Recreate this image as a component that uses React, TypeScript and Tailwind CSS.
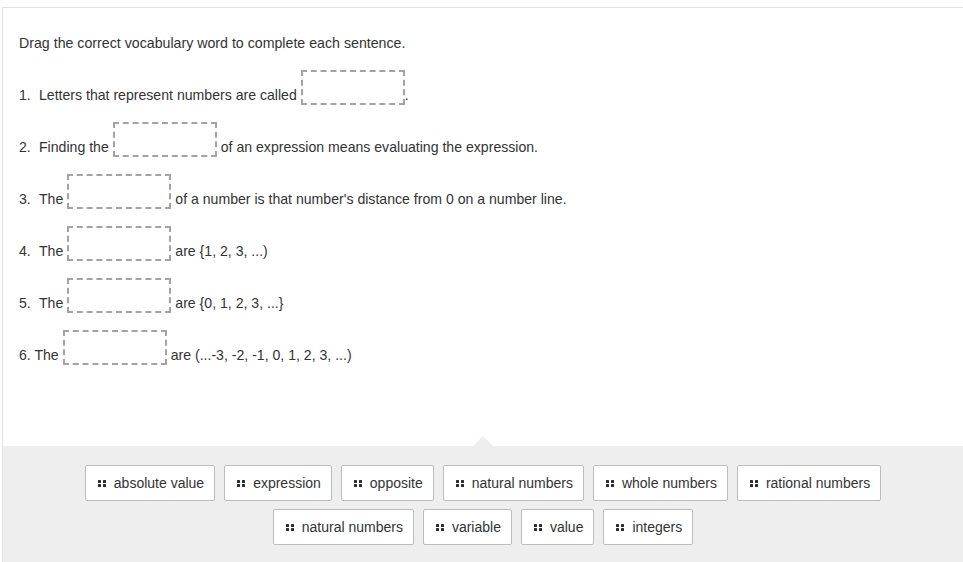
import React from 'react';

const WORDS_TOP = ['absolute value', 'expression', 'opposite', 'natural numbers', 'whole numbers', 'rational numbers'];
const WORDS_BOTTOM = ['natural numbers', 'variable', 'value', 'integers'];

function DropBox() {
  return (
    <span className="inline-block align-bottom w-[104px] h-[35px] border-2 border-dashed border-[#a3a3a3] mx-[4px]" />
  );
}

function GripIcon() {
  return (
    <svg width="8" height="7" viewBox="0 0 8 7" className="shrink-0">
      <rect x="0" y="0" width="3" height="3" rx="0.6" fill="#2b2b2b" />
      <rect x="5" y="0" width="3" height="3" rx="0.6" fill="#2b2b2b" />
      <rect x="0" y="4" width="3" height="3" rx="0.6" fill="#2b2b2b" />
      <rect x="5" y="4" width="3" height="3" rx="0.6" fill="#2b2b2b" />
    </svg>
  );
}

function WordChip({ word }: { word: string }) {
  return (
    <div className="flex items-center gap-[8px] h-[36px] pl-[12px] pr-[10px] bg-white border border-[#bcbcbc] rounded-[2px] text-[14px] text-[#333]">
      <GripIcon />
      <span>{word}</span>
    </div>
  );
}

function Sentence({ num, children }: { num: string; children: React.ReactNode }) {
  return (
    <div className="leading-[20px] mt-[17px]">
      <span className="inline-block w-[20px]">{num}</span>
      {children}
    </div>
  );
}

export default function App() {
  return (
    <div className="w-[963px] h-[562px] overflow-hidden bg-white pt-[7px] pl-[2px] font-['Liberation_Sans',Arial,sans-serif] text-[#333]">
      <div className="h-full border-t border-l border-[#e2e2e2] flex flex-col">
        <div className="shrink-0 pl-[16px] pt-[25px] text-[14.1px] h-[438px]">
          <p className="leading-[20px] text-[14.2px]">Drag the correct vocabulary word to complete each sentence.</p>

          <Sentence num="1.">
            Letters that represent numbers are called
            <DropBox />
            <span className="-ml-[4px]">.</span>
          </Sentence>
          <Sentence num="2.">
            Finding the
            <DropBox />
            of an expression means evaluating the expression.
          </Sentence>
          <Sentence num="3.">
            The
            <DropBox />
            of a number is that number's distance from 0 on a number line.
          </Sentence>
          <Sentence num="4.">
            The
            <DropBox />
            are {'{'}1, 2, 3, ...)
          </Sentence>
          <Sentence num="5.">
            The
            <DropBox />
            are {'{'}0, 1, 2, 3, ...{'}'}
          </Sentence>
          <div className="leading-[20px] mt-[17px]">
            6. The
            <DropBox />
            are (...-3, -2, -1, 0, 1, 2, 3, ...)
          </div>
        </div>

        <div className="relative flex-1 min-h-0 bg-[#eeeeee] pt-[19px]">
          <div className="absolute left-1/2 -top-[10px] -translate-x-1/2 w-0 h-0 border-l-[10px] border-r-[10px] border-b-[10px] border-l-transparent border-r-transparent border-b-[#eeeeee]" />
          <div className="flex flex-col items-center gap-[8px]">
            <div className="flex gap-[9px]">
              {WORDS_TOP.map((w) => (
                <WordChip key={w} word={w} />
              ))}
            </div>
            <div className="flex gap-[9px]">
              {WORDS_BOTTOM.map((w) => (
                <WordChip key={w} word={w} />
              ))}
            </div>
          </div>
        </div>
      </div>
    </div>
  );
}
